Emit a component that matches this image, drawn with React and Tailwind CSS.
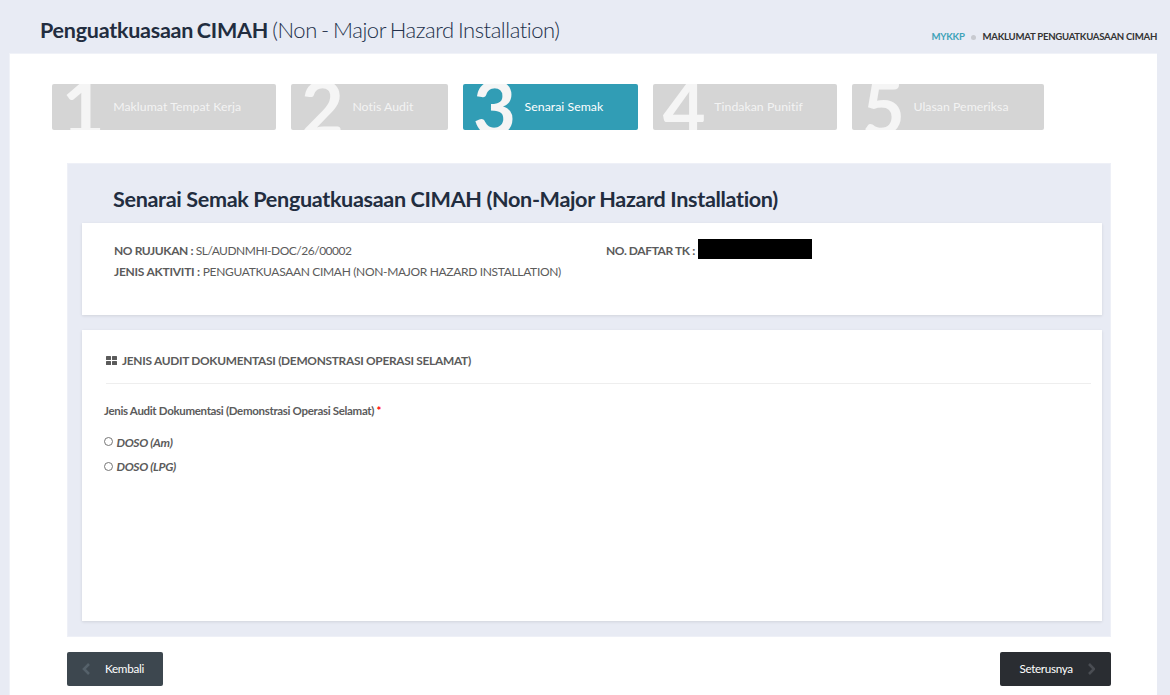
import React from 'react';

const steps = [
  { n: '1', label: 'Maklumat Tempat Kerja', box: 'w-[224px] bg-[#d5d5d5]' },
  { n: '2', label: 'Notis Audit', box: 'w-[157px] bg-[#d5d5d5]' },
  { n: '3', label: 'Senarai Semak', box: 'w-[174.5px] bg-[#319db5]', active: true },
  { n: '4', label: 'Tindakan Punitif', box: 'w-[184px] bg-[#d5d5d5]' },
  { n: '5', label: 'Ulasan Pemeriksa', box: 'w-[192px] bg-[#d5d5d5]' },
];

function Step({ n, label, box, active }) {
  return (
    <li className={`relative flex h-[46px] items-center overflow-hidden rounded-[2px] pt-px pl-[61.5px] ${box}`}>
      <span className="absolute left-[10px] top-[-14px] text-[74px] leading-[73px] font-bold text-[#f5f5f5]">{n}</span>
      <span className={`text-[12.3px] tracking-[0.03px] ${active ? 'text-white' : 'text-[#f3f3f3]'}`}>{label}</span>
    </li>
  );
}

function Option({ label }) {
  return (
    <label className="flex h-[24.5px] items-center gap-[3.5px] text-[12px] font-bold tracking-[-0.33px] italic">
      <input type="radio" name="doso" className="m-0 mb-px h-[9px] w-[9px] appearance-none rounded-full border border-[#767676] bg-white" />
      <span className="pt-px">{label}</span>
    </label>
  );
}

function Chevron({ d, color }) {
  return (
    <svg className={`h-[12px] w-[8px] ${color}`} viewBox="0 0 8 12" fill="none" stroke="currentColor" strokeWidth="2.6">
      <path d={d} />
    </svg>
  );
}

export default function App() {
  return (
    <div className="flex h-[695px] flex-col overflow-hidden bg-[#e8ebf4] font-['Lato',sans-serif] text-[#5b5b5b]">
      <header className="flex h-[53px] shrink-0 justify-between whitespace-nowrap pr-[13px] pl-[40px]">
        <h1 className="pt-[15px] text-[22px] leading-[30px] font-light tracking-[-0.46px] [word-spacing:-1.2px] text-[#22304a]">
          <b className="text-[21.5px] font-bold tracking-[-0.25px] text-[#222d3f]">Penguatkuasaan CIMAH</b> (Non - Major Hazard Installation)
        </h1>
        <nav className="mt-[28px] flex h-[16px] items-center pt-[2px] text-[9.6px] font-bold tracking-[-0.27px]">
          <span className="text-[#3fa3b9]">MYKKP</span>
          <i className="mx-[6.5px] h-[5px] w-[5px] rounded-full bg-[#c8cad0]" />
          <span className="text-[#333]">MAKLUMAT PENGUATKUASAAN CIMAH</span>
        </nav>
      </header>
      <main className="mr-[13px] ml-[9px] flex-1 border-t border-l border-[#f0f2f8] bg-white">
        <ol className="flex gap-[15.2px] whitespace-nowrap pt-[30px] pl-[41.7px]">
          {steps.map((s) => <Step key={s.n} {...s} />)}
        </ol>
        <section className="mt-[33px] ml-[57px] h-[474px] w-[1044px] border border-[#eef0f7] bg-[#e8ebf4] pl-[14px] whitespace-nowrap">
          <h2 className="h-[59px] pt-[20px] pl-[31px] text-[21.6px] leading-[30px] font-bold tracking-[-0.35px] text-[#222d3f]">
            Senarai Semak Penguatkuasaan CIMAH (Non-Major Hazard Installation)
          </h2>
          <div className="flex h-[92px] w-[1020px] bg-white pt-[16.5px] pl-[32px] text-[12px] leading-[21.5px] shadow-[0_1px_3px_rgba(0,0,0,0.1)]">
            <div className="w-[492px]">
              <p className="tracking-[-0.48px]"><b className="tracking-[-0.41px]">NO RUJUKAN :</b> SL/AUDNMHI-DOC/26/00002</p>
              <p className="tracking-[-0.33px]"><b className="tracking-[-0.25px]">JENIS AKTIVITI :</b> PENGUATKUASAAN CIMAH (NON-MAJOR HAZARD INSTALLATION)</p>
            </div>
            <div className="flex">
              <b className="w-[92px] tracking-[-0.4px]">NO. DAFTAR TK :</b>
              <span className="-mt-[0.5px] h-[20px] w-[114px] bg-black" />
            </div>
          </div>
          <div className="mt-[15px] h-[291px] w-[1020px] bg-white pr-[11px] pl-[22px] shadow-[0_1px_3px_rgba(0,0,0,0.1)]">
            <h3 className="ml-[2px] flex h-[54px] items-center gap-[5px] border-b border-[#eeeeee] pt-[9px] text-[11.9px] font-bold tracking-[-0.29px]">
              <svg className="mb-px h-[9px] w-[11px]" viewBox="0 0 11 9" fill="currentColor">
                <rect width="5" height="4" rx="0.5" /><rect x="6" width="5" height="4" rx="0.5" />
                <rect y="5" width="5" height="4" rx="0.5" /><rect x="6" y="5" width="5" height="4" rx="0.5" />
              </svg>
              <span>JENIS AUDIT DOKUMENTASI (DEMONSTRASI OPERASI SELAMAT)</span>
            </h3>
            <p className="mt-[17px] mb-[9px] text-[11.5px] leading-[20px] font-bold tracking-[-0.32px]">
              Jenis Audit Dokumentasi (Demonstrasi Operasi Selamat) <span className="text-[#f00]">*</span>
            </p>
            <Option label="DOSO (Am)" />
            <Option label="DOSO (LPG)" />
          </div>
        </section>
        <footer className="mt-[15px] ml-[57px] flex w-[1044px] justify-between text-[11.7px] tracking-[-0.3px] text-white">
          <button className="flex h-[34px] w-[96px] items-center rounded-[2px] bg-[#3d474f] pl-[15px]">
            <Chevron d="M7 1 2 6l5 5" color="text-[#55616a]" />
            <span className="ml-[15px]">Kembali</span>
          </button>
          <button className="flex h-[34px] w-[111px] items-center rounded-[2px] bg-[#2a2d32] pl-[19.5px]">
            <span className="w-[67px] text-left tracking-[-0.35px]">Seterusnya</span>
            <Chevron d="M2 1l5 5-5 5" color="text-[#4a4d53]" />
          </button>
        </footer>
      </main>
    </div>
  );
}
